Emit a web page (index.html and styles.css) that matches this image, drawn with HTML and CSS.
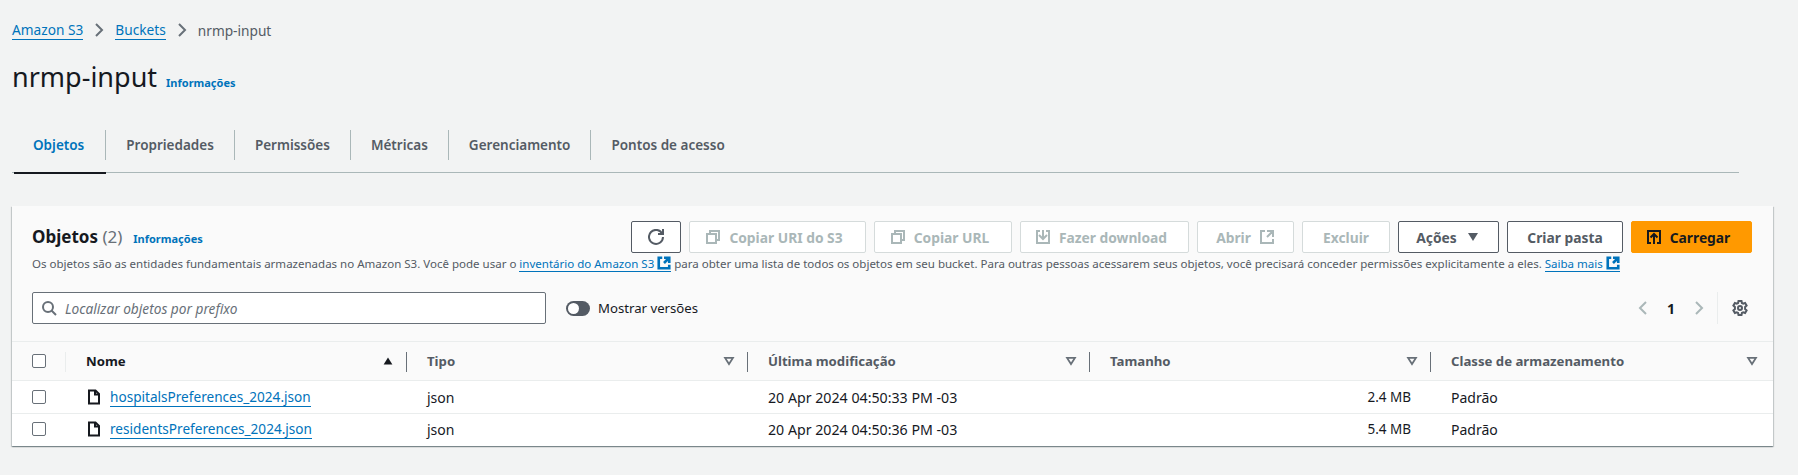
FILE: index.html
```html
<!DOCTYPE html>
<html lang="pt-BR">
<head>
<meta charset="utf-8">
<title>nrmp-input</title>
<link rel="stylesheet" href="styles.css">
</head>
<body>
<svg class="defs" width="0" height="0" aria-hidden="true">
  <symbol id="i-ext" viewBox="0 0 16 16"><path d="M14 8V2H8M14 2 8 8M6 2H2v12h12v-4"/></symbol>
  <symbol id="i-copy" viewBox="0 0 16 16"><path d="M2 5h9v9H2z"/><path d="M5 5V2h9v9h-3"/></symbol>
  <symbol id="i-chev" viewBox="0 0 16 16"><path d="m5 2 6 6-6 6"/></symbol>
  <symbol id="i-chev-l" viewBox="0 0 16 16"><path d="m11 2-6 6 6 6"/></symbol>
  <symbol id="i-file" viewBox="0 0 16 16"><path d="M3 1.500h6.500L13 5v9.500H3z"/><path d="M9 1.500V5.500h4"/></symbol>
  <symbol id="i-down" viewBox="0 0 16 16"><path d="M3.500 4.500h9L8 11.500z"/></symbol>
</svg>
<main class="page">
  <nav class="crumbs">
    <a class="link" href="#">Amazon S3</a>
    <svg class="crumb-sep"><use href="#i-chev"/></svg>
    <a class="link" href="#">Buckets</a>
    <svg class="crumb-sep"><use href="#i-chev"/></svg>
    <span class="crumb-cur">nrmp-input</span>
  </nav>
  <header class="title-row">
    <h1>nrmp-input</h1>
    <a class="info" href="#">Informações</a>
  </header>
  <div class="tabs">
    <a class="tab tab-active" href="#"><span>Objetos</span></a>
    <a class="tab" href="#"><span>Propriedades</span></a>
    <a class="tab" href="#"><span>Permissões</span></a>
    <a class="tab" href="#"><span>Métricas</span></a>
    <a class="tab" href="#"><span>Gerenciamento</span></a>
    <a class="tab tab-last" href="#"><span>Pontos de acesso</span></a>
  </div>
  <section class="card">
    <div class="card-head">
      <div class="head-row">
        <div class="head-title">
          <h2>Objetos <span class="count">(2)</span></h2>
          <a class="info" href="#">Informações</a>
        </div>
        <div class="actions">
          <button class="btn btn-refresh"><svg class="ico" viewBox="0 0 16 16"><path d="M10 5h5V0"/><path d="M15 8a7 7 0 1 1-.6-2.900"/></svg></button>
          <button class="btn off w-uri lead"><svg class="ico"><use href="#i-copy"/></svg>Copiar URI do S3</button>
          <button class="btn off w-url lead"><svg class="ico"><use href="#i-copy"/></svg>Copiar URL</button>
          <button class="btn off w-dl lead"><svg class="ico" viewBox="0 0 16 16"><path d="M11 2h3v12H2V2h3"/><path d="m4 6 4 4 4-4M8 1v9"/></svg>Fazer download</button>
          <button class="btn off w-open">Abrir<svg class="ico"><use href="#i-ext"/></svg></button>
          <button class="btn off w-del">Excluir</button>
          <button class="btn w-act">Ações<svg class="ico caret" viewBox="0 0 16 16"><path d="M3 4h10l-5 8z"/></svg></button>
          <button class="btn w-new">Criar pasta</button>
          <button class="btn primary w-up lead"><svg class="ico" viewBox="0 0 16 16"><path d="M5 14H2V2h12v12h-3M4.500 8.500 8 5l3.500 3.500M8 5.500V15"/></svg>Carregar</button>
        </div>
      </div>
      <p class="desc">Os objetos são as entidades fundamentais armazenadas no Amazon S3. Você pode usar o <a class="link" href="#">inventário do Amazon S3 <svg class="ext"><use href="#i-ext"/></svg></a> para obter uma lista de todos os objetos em seu bucket. Para outras pessoas acessarem seus objetos, você precisará conceder permissões explicitamente a eles. <a class="link" href="#">Saiba mais <svg class="ext"><use href="#i-ext"/></svg></a></p>
      <div class="filter-row">
        <label class="search">
          <svg class="ico" viewBox="0 0 16 16"><circle cx="7" cy="7" r="5"/><path d="m15 15-4.500-4.500"/></svg>
          <span>Localizar objetos por prefixo</span>
        </label>
        <span class="toggle"></span>
        <span class="toggle-label">Mostrar versões</span>
        <div class="pager">
          <svg class="ico dim"><use href="#i-chev-l"/></svg>
          <b>1</b>
          <svg class="ico dim"><use href="#i-chev"/></svg>
          <i class="pager-sep"></i>
          <svg class="ico gear" viewBox="0 0 16 16"><path d="M6.500 1h3l.4 2 1.300.7 1.900-.7 1.500 2.600-1.500 1.300v2.200l1.500 1.300-1.500 2.600-1.900-.7-1.300.7-.4 2h-3l-.4-2-1.300-.7-1.900.7-1.500-2.600 1.500-1.300V6.900L1.400 5.600 2.900 3l1.900.7 1.300-.7z"/><circle cx="8" cy="8" r="2"/></svg>
        </div>
      </div>
    </div>
    <div class="table">
      <div class="th th-check"><span class="check"></span></div>
      <div class="th"><span class="strong">Nome</span><svg class="sort up" viewBox="0 0 16 16"><path d="M3 12h10L8 4z"/></svg></div>
      <div class="th"><span>Tipo</span><svg class="sort"><use href="#i-down"/></svg></div>
      <div class="th"><span>Última modificação</span><svg class="sort"><use href="#i-down"/></svg></div>
      <div class="th"><span>Tamanho</span><svg class="sort"><use href="#i-down"/></svg></div>
      <div class="th th-last"><span>Classe de armazenamento</span><svg class="sort"><use href="#i-down"/></svg></div>

      <div class="td td-check"><span class="check"></span></div>
      <div class="td td-name"><svg class="ico file"><use href="#i-file"/></svg><a class="link" href="#">hospitalsPreferences_2024.json</a></div>
      <div class="td">json</div>
      <div class="td td-date">20 Apr 2024 04:50:33 PM -03</div>
      <div class="td td-num">2.4 MB</div>
      <div class="td">Padrão</div>

      <div class="td td-check"><span class="check"></span></div>
      <div class="td td-name"><svg class="ico file"><use href="#i-file"/></svg><a class="link" href="#">residentsPreferences_2024.json</a></div>
      <div class="td">json</div>
      <div class="td td-date">20 Apr 2024 04:50:36 PM -03</div>
      <div class="td td-num">5.4 MB</div>
      <div class="td">Padrão</div>
    </div>
  </section>
</main>
</body>
</html>
```
FILE: styles.css
```css
* { box-sizing: border-box; }
html, body { margin: 0; height: 100%; }
body {
  background: #f2f3f3;
  color: #16191f;
  font-family: "Noto Sans", "Liberation Sans", sans-serif;
  font-size: 14px;
  overflow: hidden;
}
.defs { position: absolute; }
svg { fill: none; stroke: currentColor; stroke-width: 2; }
.page { padding: 0 26px 0 12px; }
a { text-decoration: none; }
.link { color: #0073bb; border-bottom: 1px solid #0073bb; }

.crumbs { display: flex; align-items: center; height: 20px; margin-top: 20px; font-size: 13.7px; }
.crumb-sep { width: 16px; height: 16px; margin: 0 8px; color: #687078; }
.crumb-cur { color: #545b64; }

.title-row { display: flex; align-items: baseline; gap: 8px; margin-top: 19px; height: 40px; }
h1 { margin: 0; font-size: 27px; font-weight: 400; line-height: 36px; }
.info { font-size: 11px; font-weight: 700; color: #0073bb; }
.title-row .info { margin-left: 1px; }
.head-title .info { margin-left: 3px; }

.tabs { display: flex; height: 50px; margin-top: 24px; border-bottom: 1px solid #aab7b8; margin-right: 33px; }
.tab { position: relative; display: block; height: 50px; padding-top: 7px; color: #545b64; font-size: 13.5px; font-weight: 600; }
.tab span { display: flex; align-items: center; height: 30px; padding: 0 20px; border-right: 1px solid #aab7b8; }
.tab-last span { border-right: 0; }
.tab-active { color: #0073bb; margin-left: 2px; }
.tab-active span { padding: 0 21px 0 19px; }
.tab-active::after { content: ""; position: absolute; left: 0; right: 0; bottom: -1px; height: 2px; background: #16191f; }

.card { margin-top: 33px; width: 1761px; background: #fff; box-shadow: 0 1px 1px 0 rgba(0,28,36,.3), 1px 1px 1px 0 rgba(0,28,36,.15), -1px 1px 1px 0 rgba(0,28,36,.15); }
.card-head { background: #fafafa; padding: 15px 21px 15px 20px; height: 136px; border-bottom: 1px solid #eaeded; }
.head-row { display: flex; justify-content: space-between; align-items: center; height: 32px; }
.head-title { display: flex; align-items: baseline; gap: 8px; }
h2 { margin: 0; font-size: 17px; font-weight: 700; line-height: 22px; }
.count { font-weight: 400; color: #687078; }
.actions { display: flex; gap: 8px; }
.btn { display: flex; align-items: center; justify-content: center; gap: 8px; height: 32px; padding: 0; border: 1px solid #545b64; border-radius: 2px; background: #fff; color: #545b64; font: 700 13.8px "Noto Sans", "Liberation Sans", sans-serif; }
.btn-refresh { width: 50px; }
.lead { padding-right: 7px; }
.off { border-color: #d5dbdb; color: #aab7b8; }
.primary { background: #ff9900; border-color: #ff9900; color: #16191f; }
.ico { width: 16px; height: 16px; flex: none; }
.caret { fill: currentColor; stroke: none; }
.w-uri { width: 177px; } .w-url { width: 138px; } .w-dl { width: 169px; } .w-open { width: 97px; } .w-del { width: 88px; } .w-act { width: 101px; } .w-new { width: 116px; } .w-up { width: 121px; }

.desc { margin: 1px 0 0; font-size: 11.53px; line-height: 20px; color: #545b64; white-space: nowrap; }
.ext { width: 14px; height: 14px; vertical-align: -2px; stroke-width: 3; }

.filter-row { display: flex; align-items: center; height: 34px; margin-top: 17px; margin-right: -1px; }
.search { display: flex; align-items: center; gap: 8px; width: 514px; height: 32px; padding-left: 8px; background: #fff; border: 1px solid #687078; border-radius: 2px; color: #687078; font-size: 13.7px; font-style: italic; }
.toggle { position: relative; width: 24px; height: 15px; margin-left: 20px; border-radius: 8px; background: #545b64; }
.toggle::before { content: ""; position: absolute; left: 2px; top: 2px; width: 11px; height: 11px; border-radius: 50%; background: #fff; }
.toggle-label { margin-left: 8px; font-size: 13.2px; }
.pager { display: flex; align-items: center; margin-left: auto; height: 32px; margin-right: 5px; }
.pager b { width: 40px; text-align: center; font-size: 14px; font-weight: 700; }
.dim { color: #aab7b8; }
.pager-sep { width: 1px; height: 32px; margin: 0 14px 0 10px; background: #eaeded; }
.gear { color: #545b64; }

.table { display: grid; grid-template-columns: 54px 341px 341px 342px 341px 342px; }
.th { display: flex; align-items: center; justify-content: space-between; height: 39px; padding: 0 12px 0 20px; background: #fafafa; border-bottom: 1px solid #eaeded; position: relative; font-size: 13.2px; font-weight: 700; color: #545b64; }
.th::after { content: ""; position: absolute; right: 0; top: 10px; height: 20px; width: 1px; background: #687078; }
.th-check::after { background: #eaeded; }
.th-last::after { display: none; }
.th-last { padding-right: 14px; }
.th-check, .td-check { justify-content: flex-start; }
.strong { color: #16191f; }
.sort { width: 14px; height: 14px; color: #687078; }
.sort.up { color: #16191f; fill: currentColor; stroke: none; }
.check { display: block; width: 14px; height: 14px; background: #fff; border: 1px solid #687078; border-radius: 2px; }
.td { display: flex; align-items: center; height: 33px; padding-left: 20px; background: #fff; border-bottom: 1px solid #eaeded; font-size: 14px; }
.td:nth-last-child(-n+6) { height: 32px; border-bottom: 0; padding-bottom: 2px; }
.td-name { gap: 8px; font-size: 13.6px; }
.td-date { font-size: 14.2px; }
.td-num { justify-content: flex-end; padding-right: 20px; font-size: 13.5px; }
.file { color: #16191f; }
```
